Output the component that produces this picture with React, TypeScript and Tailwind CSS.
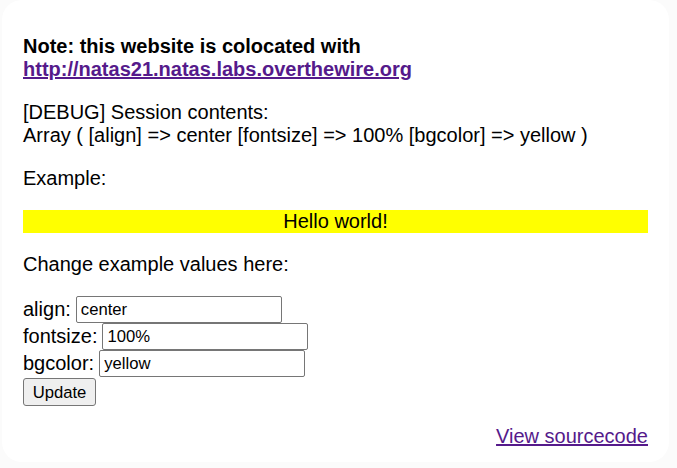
export default function App() {
  const fields = [
    { label: "align:", value: "center" },
    { label: "fontsize:", value: "100%" },
    { label: "bgcolor:", value: "yellow" },
  ];

  return (
    <div className="h-[468px] w-[677px] bg-[#fbfbfb] pb-[6px] pl-[2px] pr-[8px]">
      <div className="h-full rounded-[20px] bg-white pl-[21px] pr-[21px] pt-[35px] font-['Liberation_Sans',Arial,sans-serif] text-[20px] leading-[23px] text-black">
        <p className="font-bold">
          Note: this website is colocated with
          <br />
          <a
            className="text-[#551a8b] underline"
            href="#natas21"
          >
            http://natas21.natas.labs.overthewire.org
          </a>
        </p>
        <p className="mt-[20px]">
          [DEBUG] Session contents:
          <br />
          Array ( [align] =&gt; center [fontsize] =&gt; 100% [bgcolor] =&gt;
          yellow )
        </p>
        <p className="mt-[20px]">Example:</p>
        <div className="mt-[20px] bg-[#ffff00] text-center">Hello world!</div>
        <p className="mt-[20px]">Change example values here:</p>
        <form className="mt-[20px]" onSubmit={(e) => e.preventDefault()}>
          {fields.map((field) => (
            <div className="flex h-[27px] items-center" key={field.label}>
              <span>{field.label}</span>
              <input
                className="ml-[5px] h-[27px] w-[206px] rounded-[2px] border border-[#767676] bg-white px-[4px] font-['Liberation_Sans',Arial,sans-serif] text-[16.67px] text-black outline-none"
                defaultValue={field.value}
                type="text"
              />
            </div>
          ))}
          <button
            className="mt-[1px] h-[28px] w-[73px] rounded-[3px] border border-[#767676] bg-[#efefef] font-['Liberation_Sans',Arial,sans-serif] text-[16.67px] text-black"
            type="submit"
          >
            Update
          </button>
        </form>
        <div className="mt-[19px] text-right">
          <a className="text-[#551a8b] underline" href="#source">
            View sourcecode
          </a>
        </div>
      </div>
    </div>
  );
}
